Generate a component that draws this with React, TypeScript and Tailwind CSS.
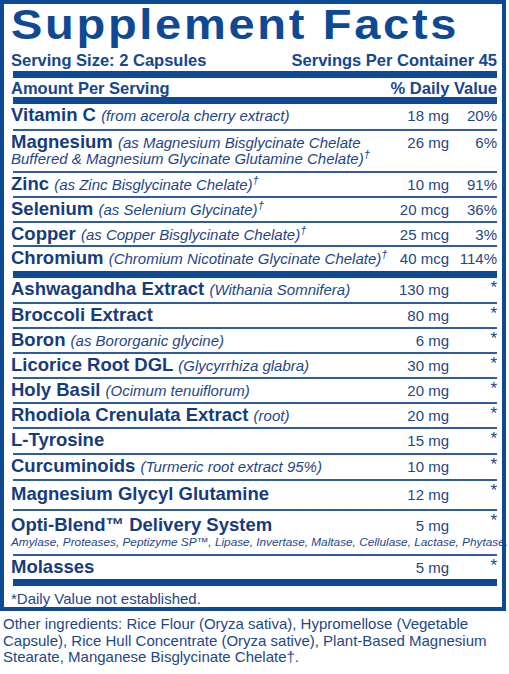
type Nutrient = {
  name: string;
  desc?: string;
  dagger?: boolean;
  amount: string;
  dv: string;
  h: string;
  pt?: string;
  sub?: string;
};

const vitamins: Nutrient[] = [
  { name: "Vitamin C", desc: "(from acerola cherry extract)", amount: "18 mg", dv: "20%", h: "h-[25px]" },
  {
    name: "Magnesium",
    desc: "(as Magnesium Bisglycinate Chelate Buffered & Magnesium Glycinate Glutamine Chelate)",
    dagger: true,
    amount: "26 mg",
    dv: "6%",
    h: "h-[40px]",
  },
  { name: "Zinc", desc: "(as Zinc Bisglycinate Chelate)", dagger: true, amount: "10 mg", dv: "91%", h: "h-[23px]" },
  { name: "Selenium", desc: "(as Selenium Glycinate)", dagger: true, amount: "20 mcg", dv: "36%", h: "h-[23px]" },
  { name: "Copper", desc: "(as Copper Bisglycinate Chelate)", dagger: true, amount: "25 mcg", dv: "3%", h: "h-[22px]" },
  {
    name: "Chromium",
    desc: "(Chromium Nicotinate Glycinate Chelate)",
    dagger: true,
    amount: "40 mcg",
    dv: "114%",
    h: "h-[24px]",
  },
];

const others: Nutrient[] = [
  { name: "Ashwagandha Extract", desc: "(Withania Somnifera)", amount: "130 mg", dv: "*", h: "h-[24px]" },
  { name: "Broccoli Extract", amount: "80 mg", dv: "*", h: "h-[23px]" },
  { name: "Boron", desc: "(as Bororganic glycine)", amount: "6 mg", dv: "*", h: "h-[23px]" },
  { name: "Licorice Root DGL", desc: "(Glycyrrhiza glabra)", amount: "30 mg", dv: "*", h: "h-[23px]" },
  { name: "Holy Basil", desc: "(Ocimum tenuiflorum)", amount: "20 mg", dv: "*", h: "h-[23px]" },
  { name: "Rhodiola Crenulata Extract", desc: "(root)", amount: "20 mg", dv: "*", h: "h-[23px]" },
  { name: "L-Tyrosine", amount: "15 mg", dv: "*", h: "h-[24px]" },
  { name: "Curcuminoids", desc: "(Turmeric root extract 95%)", amount: "10 mg", dv: "*", h: "h-[24px]" },
  { name: "Magnesium Glycyl Glutamine", amount: "12 mg", dv: "*", h: "h-[28px]", pt: "pt-[5px]" },
  {
    name: "Opti-Blend™ Delivery System",
    amount: "5 mg",
    dv: "*",
    h: "h-[43px]",
    pt: "pt-[6px]",
    sub: "Amylase, Proteases, Peptizyme SP™, Lipase, Invertase, Maltase, Cellulase, Lactase, Phytase.",
  },
  { name: "Molasses", amount: "5 mg", dv: "*", h: "h-[23px]" },
];

function Bar() {
  return <div className="ml-[2px] h-[7px] bg-[#0e4a94]" />;
}

function Rule() {
  return <div className="ml-[2px] h-[2px] bg-[#2f5c9f]" />;
}

function Row({ n }: { n: Nutrient }) {
  return (
    <div className={n.h}>
      <div className="flex items-baseline">
        <div className={`min-w-0 flex-1 text-[18.5px] font-bold leading-[16px] text-[#163c7e] ${n.pt ?? "pt-[3px]"}`}>
          {n.name}
          {n.desc && (
            <>
              {" "}
              <span className="text-[15px] font-normal italic leading-[14px] text-[#1e4688]">
                {n.desc}
                {n.dagger && <sup>†</sup>}
              </span>
            </>
          )}
        </div>
        <div className="w-[53px] shrink-0 text-right text-[15px] leading-[16px] text-[#1e4688]">{n.amount}</div>
        {n.dv === "*" ? (
          <div className="w-[48px] shrink-0 self-start pt-[2px] text-right text-[17px] leading-[16px] text-[#1e4688]">
            *
          </div>
        ) : (
          <div className="w-[48px] shrink-0 text-right text-[15px] leading-[16px] text-[#1e4688]">{n.dv}</div>
        )}
      </div>
      {n.sub && (
        <div className="mt-[2px] whitespace-nowrap text-[11.8px] italic leading-[13px] text-[#1e4688]">{n.sub}</div>
      )}
    </div>
  );
}

export default function App() {
  return (
    <div className="w-[509px] bg-white font-['Liberation_Sans',Arial,sans-serif]">
      <div className="h-[611px] w-[506px] border-4 border-[#0e4a94] pl-[7px] pr-[5px]">
        <h1 className="h-[42px] whitespace-nowrap text-[42px] font-bold leading-[42px] text-[#0e4a94]">
          <span className="inline-block origin-left scale-x-[1.12] tracking-[2.4px]">Supplement Facts</span>
        </h1>
        <div className="mt-[5px] flex h-[18px] justify-between text-[16.5px] font-bold leading-[18px] text-[#154690]">
          <span>Serving Size: 2 Capsules</span>
          <span>Servings Per Container 45</span>
        </div>
        <div className="mt-[2px]">
          <Bar />
        </div>
        <div className="flex h-[19px] justify-between pt-[1px] text-[16.5px] font-bold leading-[18px] text-[#154690]">
          <span>Amount Per Serving</span>
          <span>% Daily Value</span>
        </div>
        <Bar />

        {vitamins.map((n, i) => (
          <div key={n.name}>
            <Row n={n} />
            {i < vitamins.length - 1 && <Rule />}
          </div>
        ))}
        <Bar />

        {others.map((n, i) => (
          <div key={n.name}>
            <Row n={n} />
            {i < others.length - 1 && <Rule />}
          </div>
        ))}
        <Bar />

        <div className="h-[21px] pt-[5px] text-[15px] leading-[16px] text-[#1e4688]">*Daily Value not established.</div>
      </div>

      <p className="mt-[5px] pl-[3px] text-[15px] leading-[16.7px] text-[#1e4688]">
        Other ingredients: Rice Flour (Oryza sativa), Hypromellose (Vegetable Capsule), Rice Hull Concentrate (Oryza
        sative), Plant-Based Magnesium Stearate, Manganese Bisglycinate Chelate†.
      </p>
    </div>
  );
}
